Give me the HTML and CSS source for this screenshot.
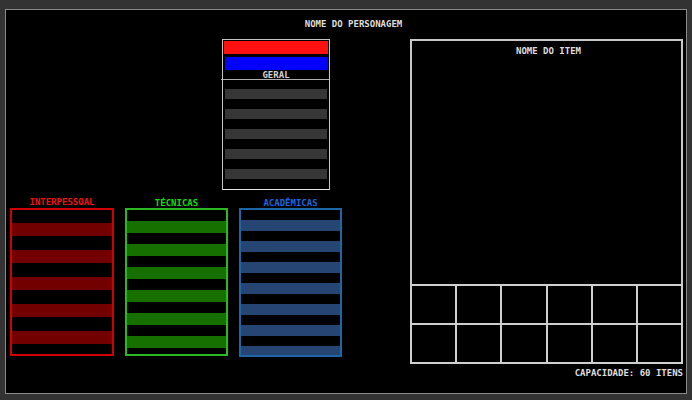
FILE: index.html
```html
<!DOCTYPE html>
<html lang="pt">
<head>
<meta charset="utf-8">
<title>Personagem</title>
<link rel="stylesheet" href="styles.css">
</head>
<body>
<div class="panel">
  <div class="char-name">NOME DO PERSONAGEM</div>
  <div class="main">
    <div class="left">
      <div class="geral">
        <div class="bar-red"></div>
        <div class="bar-blue"></div>
        <div class="geral-label">GERAL</div>
        <div class="geral-list">
          <div class="geral-row"></div>
          <div class="geral-row"></div>
          <div class="geral-row"></div>
          <div class="geral-row"></div>
          <div class="geral-row"></div>
        </div>
      </div>
      <div class="skills">
        <div class="skill inter">
          <div class="skill-title">INTERPESSOAL</div>
          <div class="skill-box">
            <div class="stripe"></div><div class="stripe"></div><div class="stripe"></div><div class="stripe"></div><div class="stripe"></div>
          </div>
        </div>
        <div class="skill tec">
          <div class="skill-title">TÉCNICAS</div>
          <div class="skill-box">
            <div class="stripe"></div><div class="stripe"></div><div class="stripe"></div><div class="stripe"></div><div class="stripe"></div><div class="stripe"></div>
          </div>
        </div>
        <div class="skill acad">
          <div class="skill-title">ACADÊMICAS</div>
          <div class="skill-box">
            <div class="stripe"></div><div class="stripe"></div><div class="stripe"></div><div class="stripe"></div><div class="stripe"></div><div class="stripe"></div><div class="stripe"></div>
          </div>
        </div>
      </div>
    </div>
    <div class="right">
      <div class="item-box">
        <div class="item-name">NOME DO ITEM</div>
      </div>
      <div class="inv-grid">
        <div class="cell"></div><div class="cell"></div><div class="cell"></div><div class="cell"></div><div class="cell"></div><div class="cell"></div>
        <div class="cell"></div><div class="cell"></div><div class="cell"></div><div class="cell"></div><div class="cell"></div><div class="cell"></div>
      </div>
      <div class="capacity">CAPACIDADE: 60 ITENS</div>
    </div>
  </div>
</div>
</body>
</html>
```

FILE: styles.css
```css
html, body {
  margin: 0;
  padding: 0;
  background: #333333;
}
body {
  font-family: "DejaVu Sans Mono", "Liberation Mono", monospace;
  font-weight: bold;
  font-size: 9px;
  color: #dedede;
}
.panel {
  box-sizing: border-box;
  margin: 9px 0 0 5px;
  width: 682px;
  height: 385px;
  background: #000;
  border: 1px solid #8a8a8a;
}
.char-name {
  margin-top: 9px;
  height: 10px;
  line-height: 10px;
  text-align: center;
  padding-left: 15px;
}
.main {
  display: flex;
  margin-top: 10px;
  padding-left: 4px;
}
.left {
  width: 332px;
  display: flex;
  flex-direction: column;
}
.geral {
  margin-left: 212px;
  width: 108px;
  box-sizing: border-box;
  border: 1px solid #c4c4c4;
  border-bottom-color: #e6e6e6;
  display: flex;
  flex-direction: column;
}
.bar-red {
  height: 13px;
  margin: 1px 1px 0 1px;
  background: #ff1010;
}
.bar-blue {
  height: 13px;
  margin: 3px 1px 0 2px;
  background: #0000ff;
}
.geral-label {
  height: 9px;
  line-height: 11px;
  text-align: center;
  color: #d4d4d4;
}
.geral-list {
  border-top: 1px solid #b0b0b0;
  margin-left: -2px;
  padding: 9px 2px 10px 4px;
  display: flex;
  flex-direction: column;
  gap: 10px;
}
.geral-row {
  height: 10px;
  background: #363636;
}
.skills {
  display: flex;
  gap: 11px;
  margin-top: 9px;
}
.skill {
  display: flex;
  flex-direction: column;
}
.skill-title {
  height: 9px;
  line-height: 9px;
  text-align: center;
}
.skill-box {
  box-sizing: border-box;
  height: 148px;
  display: flex;
  flex-direction: column;
  overflow: hidden;
}
.stripe {
  flex: none;
}
.inter { width: 104px; }
.inter .skill-title { color: #ee1111; margin-top: -1px; margin-bottom: 1px; }
.inter .skill-box {
  border: 2px solid #d00000;
  padding-top: 13px;
  gap: 14px;
}
.inter .stripe { height: 13px; background: #730000; }
.tec { width: 103px; }
.tec .skill-title { color: #11dd11; }
.tec .skill-box {
  border: 2px solid #2cb820;
  padding-top: 11px;
  gap: 11px;
}
.tec .stripe { height: 12px; background: #157000; }
.acad { width: 103px; }
.acad .skill-title { color: #1a66dd; }
.acad .skill-box {
  border: 2px solid #1d66a8;
  height: 149px;
  padding-top: 10px;
  gap: 10px;
}
.acad .stripe { height: 11px; background: #264573; }
.right {
  margin-left: 68px;
  width: 273px;
  display: flex;
  flex-direction: column;
}
.item-box {
  box-sizing: border-box;
  height: 245px;
  border: 2px solid #c8c8c8;
  border-bottom: none;
  padding-top: 5px;
}
.item-name {
  height: 10px;
  line-height: 10px;
  text-align: center;
  padding-left: 4px;
}
.inv-grid {
  box-sizing: border-box;
  height: 80px;
  display: grid;
  grid-template-columns: repeat(6, 1fr);
  grid-template-rows: repeat(2, 1fr);
  gap: 2px;
  padding: 2px;
  background: #cfcfcf;
}
.cell {
  background: #000;
}
.capacity {
  margin-top: 4px;
  height: 10px;
  line-height: 10px;
  text-align: right;
}
```
